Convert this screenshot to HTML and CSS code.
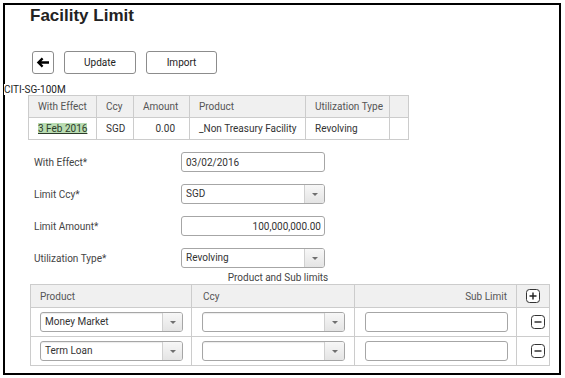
FILE: index.html
```html
<!DOCTYPE html>
<html lang="en">
<head>
    <meta charset="UTF-8">
    <title>Facility Limit</title>
    <link rel="stylesheet" href="styles.css">
</head>
<body>
    <div class="frame">
        <h1 class="title">Facility Limit</h1>

        <div class="toolbar">
            <button class="btn btn-back" type="button">
                <svg width="14" height="11" viewBox="0 0 14 11"><path d="M13 5.5H2.8M6.6 1.4L2.4 5.5l4.2 4.1" stroke="#000" stroke-width="2.3" fill="none"/></svg>
            </button>
            <button class="btn btn-update" type="button">Update</button>
            <button class="btn btn-import" type="button">Import</button>
        </div>

        <div class="code"><span>CITI-SG-100M</span></div>

        <!-- limit history -->
        <table class="history">
            <colgroup>
                <col style="width: 68px">
                <col style="width: 37px">
                <col style="width: 56px">
                <col style="width: 116px">
                <col style="width: 84px">
                <col style="width: 19px">
            </colgroup>
            <tr class="head">
                <td>With Effect</td>
                <td>Ccy</td>
                <td>Amount</td>
                <td>Product</td>
                <td>Utilization Type</td>
                <td></td>
            </tr>
            <tr>
                <td><span class="hl">3 Feb 2016</span></td>
                <td>SGD</td>
                <td class="num">0.00</td>
                <td>_Non Treasury Facility</td>
                <td>Revolving</td>
                <td></td>
            </tr>
        </table>

        <div class="form">
            <label for="withEffect">With Effect*</label>
            <input class="field" type="text" id="withEffect" value="03/02/2016">

            <label>Limit Ccy*</label>
            <div class="select"><span class="select-value">SGD</span><span class="select-arrow"></span></div>

            <label for="limitAmount">Limit Amount*</label>
            <input class="field field-num" type="text" id="limitAmount" value="100,000,000.00">

            <label>Utilization Type*</label>
            <div class="select"><span class="select-value">Revolving</span><span class="select-arrow"></span></div>
        </div>

        <div class="caption">Product and Sub limits</div>

        <table class="sublimits">
            <colgroup>
                <col style="width: 161px">
                <col style="width: 163px">
                <col style="width: 162px">
                <col style="width: 33px">
            </colgroup>
            <tr class="head">
                <td>Product</td>
                <td class="ccy">Ccy</td>
                <td class="num">Sub Limit</td>
                <td class="act">
                    <svg class="icon" width="14" height="14" viewBox="0 0 14 14"><rect x="0.5" y="0.5" width="13" height="13" rx="3" fill="#fff" stroke="#333"/><path d="M3.5 7h7M7 3.5v7" stroke="#222" stroke-width="1.4"/></svg>
                </td>
            </tr>
            <tr>
                <td><div class="select select-sm"><span class="select-value">Money Market</span><span class="select-arrow"></span></div></td>
                <td><div class="select select-sm"><span class="select-value"></span><span class="select-arrow"></span></div></td>
                <td><input class="field field-sm" type="text"></td>
                <td class="act">
                    <svg class="icon" width="14" height="14" viewBox="0 0 14 14"><rect x="0.5" y="0.5" width="13" height="13" rx="3" fill="#fff" stroke="#333"/><path d="M3.5 7h7" stroke="#222" stroke-width="1.4"/></svg>
                </td>
            </tr>
            <tr>
                <td><div class="select select-sm"><span class="select-value">Term Loan</span><span class="select-arrow"></span></div></td>
                <td><div class="select select-sm"><span class="select-value"></span><span class="select-arrow"></span></div></td>
                <td><input class="field field-sm" type="text"></td>
                <td class="act">
                    <svg class="icon" width="14" height="14" viewBox="0 0 14 14"><rect x="0.5" y="0.5" width="13" height="13" rx="3" fill="#fff" stroke="#333"/><path d="M3.5 7h7" stroke="#222" stroke-width="1.4"/></svg>
                </td>
            </tr>
        </table>
    </div>
</body>
</html>
```

FILE: styles.css
```css
body {
    margin: 0;
    font-family: Roboto, "Liberation Sans", sans-serif;
    font-size: 10px;
    color: #333;
    background-color: #fff;
}

.frame {
    box-sizing: border-box;
    width: 558px;
    height: 372px;
    margin: 3px;
    border: 2px solid #000;
}

.title {
    margin: 2px 0 0 25px;
    font-family: "Liberation Sans", Arial, sans-serif;
    font-size: 17px;
    line-height: 18px;
    font-weight: bold;
    color: #222;
}

.toolbar {
    display: flex;
    gap: 10px;
    margin-top: 26px;
    padding-left: 27px;
}

.btn {
    box-sizing: border-box;
    height: 23px;
    padding: 0;
    background-color: #fff;
    border: 1px solid #8c8c8c;
    border-radius: 3px;
    font-family: Roboto, sans-serif;
    font-size: 10px;
    color: #222;
}

.btn-back {
    width: 22px;
    display: flex;
    align-items: center;
    justify-content: center;
}

.btn-update {
    width: 72px;
}

.btn-import {
    width: 71px;
}

.code {
    margin: 11px 0 0 -1px;
    line-height: 10px;
    color: #222;
}

.code span {
    background-color: #fff;
    padding-right: 2px;
}

.history {
    margin-left: 23px;
    border-collapse: collapse;
    table-layout: fixed;
    width: 381px;
}

.history td {
    height: 21px;
    padding: 0 0 0 9px;
    border: 1px solid #ccc;
    white-space: nowrap;
    overflow: hidden;
}

.history .head td {
    background-color: #f0f0f0;
    color: #555;
}

.history td.num {
    text-align: right;
    padding: 0 14px 0 0;
}

.hl {
    background-color: #b9ddb2;
    color: #2c3b2a;
    text-decoration: underline;
}

.form {
    display: grid;
    grid-template-columns: 147px 144px;
    row-gap: 12px;
    margin-top: 12px;
    padding-left: 29px;
}

.form label {
    align-self: center;
    color: #444;
}

.field {
    box-sizing: border-box;
    height: 20px;
    width: 144px;
    margin: 0;
    padding: 0 4px;
    border: 1px solid #a6a6a6;
    border-radius: 3px;
    font-family: Roboto, sans-serif;
    font-size: 10px;
    color: #333;
    background-color: #fff;
}

.field-num {
    text-align: right;
    padding-right: 3px;
}

.field-sm {
    width: 143px;
    display: block;
}

.select {
    box-sizing: border-box;
    display: flex;
    height: 20px;
    width: 144px;
    border: 1px solid #a6a6a6;
    border-radius: 3px;
    overflow: hidden;
    background-color: #fff;
}

.select-sm {
    width: 143px;
    box-shadow: inset 0 1px 1px rgba(0, 0, 0, 0.08);
}

.select-value {
    flex: 1;
    padding-left: 4px;
    line-height: 18px;
    color: #333;
}

.select-arrow {
    position: relative;
    width: 19px;
    border-left: 1px solid #d0d0d0;
    background: linear-gradient(#f7f7f7, #e4e4e4);
}

.select-arrow::after {
    content: "";
    position: absolute;
    left: 7px;
    top: 8px;
    border-left: 3px solid transparent;
    border-right: 3px solid transparent;
    border-top: 3px solid #6f6f6f;
}

.caption {
    margin-top: 4px;
    padding-right: 8px;
    line-height: 12px;
    text-align: center;
    color: #444;
}

.sublimits {
    margin-left: 25px;
    border-collapse: collapse;
    table-layout: fixed;
    width: 520px;
}

.sublimits td {
    height: 28px;
    padding: 0 0 0 9px;
    border: 1px solid #ccc;
    vertical-align: middle;
}

.sublimits .head td {
    height: 22px;
    background-color: #f0f0f0;
    color: #555;
}

.sublimits td.ccy {
    padding-left: 11px;
}

.sublimits td.num {
    text-align: right;
    padding: 0 9px 0 0;
}

.sublimits tr:not(.head) td {
    padding-left: 10px;
}

.sublimits tr:not(.head) td:first-child {
    padding-left: 9px;
}

.sublimits td.act {
    padding: 0;
    text-align: center;
}

.icon {
    display: block;
    margin: 0 auto;
}
```
